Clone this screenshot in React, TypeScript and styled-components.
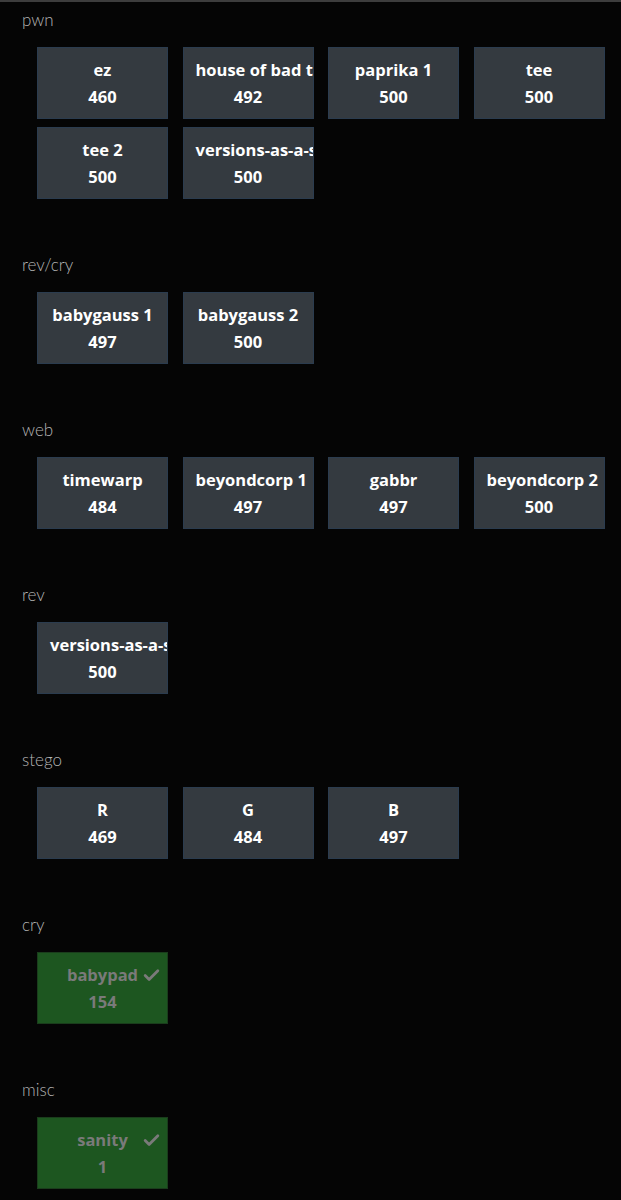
import React from "react";
import styled, { createGlobalStyle } from "styled-components";
import { Check } from "lucide-react";

type Chal = { name: string; points: number; solved?: boolean };
type Category = { title: string; chals: Chal[] };

const categories: Category[] = [
  {
    title: "pwn",
    chals: [
      { name: "ez", points: 460 },
      { name: "house of bad taste", points: 492 },
      { name: "paprika 1", points: 500 },
      { name: "tee", points: 500 },
      { name: "tee 2", points: 500 },
      { name: "versions-as-a-service", points: 500 },
    ],
  },
  {
    title: "rev/cry",
    chals: [
      { name: "babygauss 1", points: 497 },
      { name: "babygauss 2", points: 500 },
    ],
  },
  {
    title: "web",
    chals: [
      { name: "timewarp", points: 484 },
      { name: "beyondcorp 1", points: 497 },
      { name: "gabbr", points: 497 },
      { name: "beyondcorp 2", points: 500 },
    ],
  },
  { title: "rev", chals: [{ name: "versions-as-a-service", points: 500 }] },
  {
    title: "stego",
    chals: [
      { name: "R", points: 469 },
      { name: "G", points: 484 },
      { name: "B", points: 497 },
    ],
  },
  { title: "cry", chals: [{ name: "babypad", points: 154, solved: true }] },
  { title: "misc", chals: [{ name: "sanity", points: 1, solved: true }] },
];

const GlobalStyle = createGlobalStyle`
  html, body {
    margin: 0;
    padding: 0;
    background: #050505;
  }
  body {
    font-family: "Open Sans", Lato, sans-serif;
    border-top: 2px solid #3d3d3d;
  }
`;

const Board = styled.div`
  padding: 6px 0 40px;
`;

const Section = styled.section`
  margin-bottom: 54px;
`;

const CategoryTitle = styled.h3`
  margin: 0 0 15px 22px;
  font-family: Lato, sans-serif;
  font-size: 17px;
  line-height: 24px;
  font-weight: 300;
  color: #b4b4b4;
`;

const Grid = styled.div`
  display: flex;
  flex-wrap: wrap;
  gap: 8px 14.5px;
  padding-left: 37px;
`;

const Card = styled.div<{ $solved?: boolean }>`
  position: relative;
  box-sizing: border-box;
  width: 131px;
  height: 72px;
  padding: 11px 12px;
  overflow: hidden;
  text-align: center;
  font-weight: 700;
  font-size: 16.5px;
  background: ${(p) => (p.$solved ? "#1d5620" : "#343a40")};
  border: 1px solid ${(p) => (p.$solved ? "#1a3d1c" : "#2b3c4f")};
  color: ${(p) => (p.$solved ? "#7a7a7a" : "#ffffff")};
`;

const Name = styled.div`
  white-space: nowrap;
  line-height: 22px;
`;

const Points = styled.div`
  margin-top: 5px;
  line-height: 22px;
`;

const SolvedMark = styled(Check)`
  position: absolute;
  top: 13px;
  right: 6px;
  color: #7a7a7a;
`;

export default function App() {
  return (
    <Board>
      <GlobalStyle />
      {categories.map((cat) => (
        <Section key={cat.title}>
          <CategoryTitle>{cat.title}</CategoryTitle>
          <Grid>
            {cat.chals.map((c, i) => (
              <Card key={i} $solved={c.solved}>
                <Name>{c.name}</Name>
                <Points>{c.points}</Points>
                {c.solved && <SolvedMark size={19} strokeWidth={3.5} />}
              </Card>
            ))}
          </Grid>
        </Section>
      ))}
    </Board>
  );
}
